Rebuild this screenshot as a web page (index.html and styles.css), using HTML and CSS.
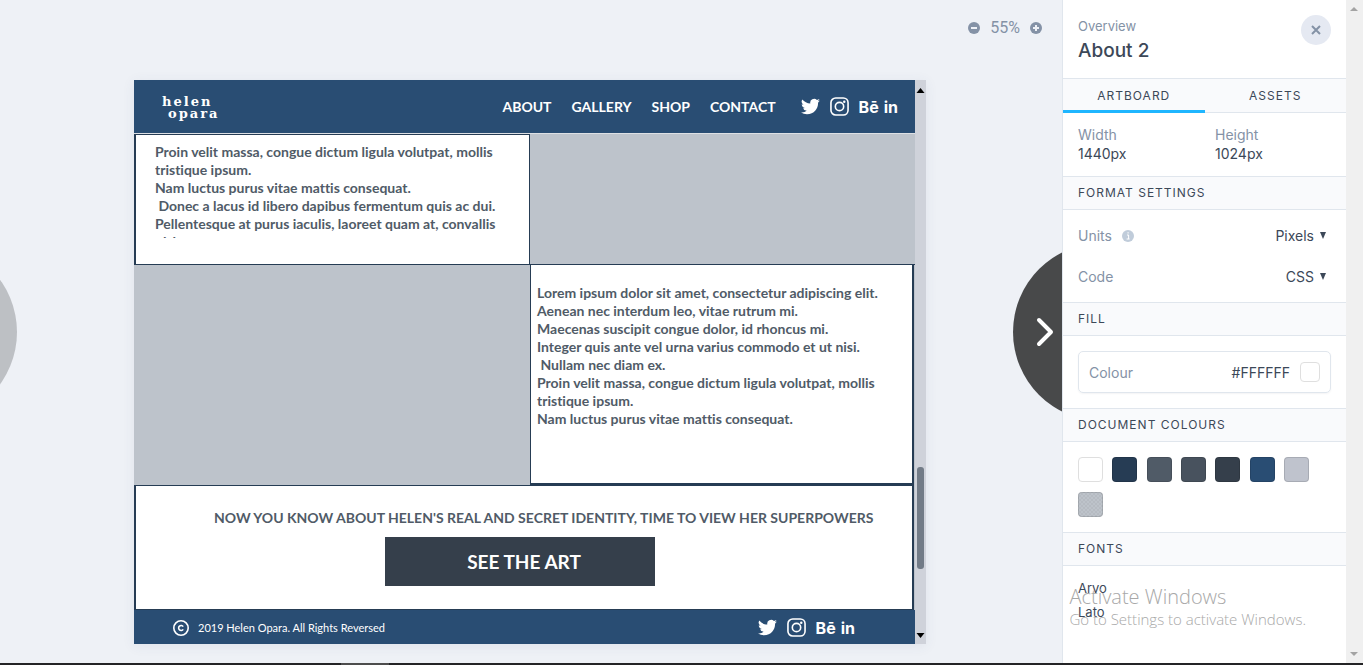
FILE: index.html
```
<!DOCTYPE html>
<html lang="en">
<head>
<meta charset="utf-8">
<title>About 2</title>
<link rel="stylesheet" href="styles.css">
</head>
<body>
<svg class="defs" width="0" height="0" aria-hidden="true">
  <symbol id="twitter" viewBox="0 0 24 24"><path fill="currentColor" d="M23.95 4.57a10 10 0 0 1-2.82.77 4.96 4.96 0 0 0 2.16-2.72c-.95.55-2 .96-3.13 1.18a4.92 4.92 0 0 0-8.38 4.48C7.69 8.1 4.07 6.13 1.64 3.16a4.9 4.9 0 0 0 1.52 6.57 4.9 4.9 0 0 1-2.23-.61v.06c0 2.39 1.69 4.38 3.95 4.83a5 5 0 0 1-2.21.08 4.94 4.94 0 0 0 4.6 3.42A9.87 9.87 0 0 1 0 19.54a13.99 13.99 0 0 0 7.55 2.21c9.05 0 14-7.5 14-13.98 0-.21 0-.42-.02-.63a9.9 9.9 0 0 0 2.42-2.57z"/></symbol>
  <symbol id="instagram" viewBox="0 0 20 20"><g fill="none" stroke="currentColor" stroke-width="1.7"><rect x="1" y="1" width="18" height="18" rx="5"/><circle cx="10" cy="10" r="4.4"/></g><circle cx="15" cy="5" r="1.3" fill="currentColor"/></symbol>
</svg>
<div class="app">
  <main class="stage">
    <div class="zoom">
      <button class="zoom-btn" aria-label="Zoom out"><svg viewBox="0 0 12 12"><circle cx="6" cy="6" r="6"/><path d="M3 6h6"/></svg></button>
      <span>55%</span>
      <button class="zoom-btn" aria-label="Zoom in"><svg viewBox="0 0 12 12"><circle cx="6" cy="6" r="6"/><path d="M3 6h6M6 3v6"/></svg></button>
    </div>
    <button class="pager prev" aria-label="Previous artboard"></button>
    <button class="pager next" aria-label="Next artboard"><svg viewBox="0 0 18 30"><path d="M3 3l12 12L3 27"/></svg></button>
    <div class="artboard">
      <div class="page">
        <header class="site-head">
          <div class="logo"><span>helen</span><span class="logo-second">opara</span></div>
          <nav class="menu"><a href="#">ABOUT</a><a href="#">GALLERY</a><a href="#">SHOP</a><a href="#">CONTACT</a></nav>
          <div class="social">
            <a href="#" aria-label="Twitter"><svg><use href="#twitter"/></svg></a>
            <a href="#" aria-label="Instagram"><svg><use href="#instagram"/></svg></a>
            <a href="#" class="mark">Bē</a><a href="#" class="mark">in</a>
          </div>
        </header>
        <section class="row row-first">
          <div class="card card-left"><div class="copy clipped"><p>Proin velit massa, congue dictum ligula volutpat, mollis</p><p>tristique ipsum.</p><p>Nam luctus purus vitae mattis consequat.</p><p> Donec a lacus id libero dapibus fermentum quis ac dui.</p><p>Pellentesque at purus iaculis, laoreet quam at, convallis</p><p>nisi.</p></div></div>
        </section>
        <section class="row row-second">
          <div class="card card-right"><div class="copy"><p>Lorem ipsum dolor sit amet, consectetur adipiscing elit.</p><p>Aenean nec interdum leo, vitae rutrum mi.</p><p>Maecenas suscipit congue dolor, id rhoncus mi.</p><p>Integer quis ante vel urna varius commodo et ut nisi.</p><p> Nullam nec diam ex.</p><p>Proin velit massa, congue dictum ligula volutpat, mollis</p><p>tristique ipsum.</p><p>Nam luctus purus vitae mattis consequat.</p></div></div>
        </section>
        <section class="cta">
          <h2>NOW YOU KNOW ABOUT HELEN'S REAL AND SECRET IDENTITY, TIME TO VIEW HER SUPERPOWERS</h2>
          <button class="cta-btn">SEE THE ART</button>
        </section>
        <footer class="site-foot">
          <svg class="copyright" viewBox="0 0 16 16"><circle cx="8" cy="8" r="7.2"/><path d="M10.2 6.6A2.5 2.5 0 1 0 10.2 9.4"/></svg>
          <small>2019 Helen Opara. All Rights Reversed</small>
          <div class="social">
            <a href="#" aria-label="Twitter"><svg><use href="#twitter"/></svg></a>
            <a href="#" aria-label="Instagram"><svg><use href="#instagram"/></svg></a>
            <a href="#" class="mark">Bē</a><a href="#" class="mark">in</a>
          </div>
        </footer>
      </div>
      <div class="page-scroll">
        <svg viewBox="0 0 8 5"><path d="M0 5L4 0l4 5z"/></svg>
        <span class="thumb"></span>
        <svg viewBox="0 0 8 5"><path d="M0 0l4 5 4-5z"/></svg>
      </div>
    </div>
  </main>
  <aside class="panel">
    <header class="panel-head">
      <div><p class="kicker">Overview</p><h1>About 2</h1></div>
      <button class="close" aria-label="Close"><svg viewBox="0 0 10 10"><path d="M1 1l8 8M9 1L1 9"/></svg></button>
    </header>
    <div class="tabs" role="tablist">
      <button role="tab" class="tab active" aria-selected="true">ARTBOARD</button>
      <button role="tab" class="tab" aria-selected="false">ASSETS</button>
    </div>
    <dl class="size">
      <div><dt>Width</dt><dd>1440px</dd></div>
      <div><dt>Height</dt><dd>1024px</dd></div>
    </dl>
    <h2 class="section">FORMAT SETTINGS</h2>
    <div class="settings">
      <div class="field">
        <label for="units">Units</label>
        <svg class="info" viewBox="0 0 12 12"><circle cx="6" cy="6" r="6"/><path d="M5 5h1.6v4M4.6 9h3M5.4 2.9h1.4"/></svg>
        <select id="units"><option>Pixels</option></select>
        <svg class="caret" viewBox="0 0 6 7"><path d="M0 0h6L3 7z"/></svg>
      </div>
      <div class="field">
        <label for="code">Code</label>
        <select id="code"><option>CSS</option></select>
        <svg class="caret" viewBox="0 0 6 7"><path d="M0 0h6L3 7z"/></svg>
      </div>
    </div>
    <h2 class="section">FILL</h2>
    <div class="fill"><div class="fill-box"><span class="fill-name">Colour</span><span>#FFFFFF</span><i class="chip white"></i></div></div>
    <h2 class="section">DOCUMENT COLOURS</h2>
    <div class="swatches">
      <button class="swatch white" aria-label="White"></button>
      <button class="swatch navy" aria-label="Navy"></button>
      <button class="swatch slate" aria-label="Slate"></button>
      <button class="swatch steel" aria-label="Steel"></button>
      <button class="swatch coal" aria-label="Coal"></button>
      <button class="swatch blue" aria-label="Blue"></button>
      <button class="swatch mist" aria-label="Mist"></button>
      <button class="swatch haze" aria-label="Haze"></button>
    </div>
    <h2 class="section">FONTS</h2>
    <ul class="fonts"><li>Arvo</li><li>Lato</li></ul>
  </aside>
  <div class="window-scroll">
    <svg viewBox="0 0 8 4"><path d="M0 4L4 0l4 4z"/></svg>
    <svg viewBox="0 0 8 4"><path d="M0 0l4 4 4-4z"/></svg>
  </div>
  <div class="watermark"><p class="wm-title">Activate Windows</p><p>Go to Settings to activate Windows.</p></div>
</div>
<div class="taskbar"><span></span></div>
</body>
</html>
```
FILE: styles.css
```
* { box-sizing: border-box; }
body, p, h1, h2, dl, dd, ul { margin: 0; padding: 0; }
body {
  height: 100vh;
  display: flex;
  flex-direction: column;
  overflow: hidden;
  font-family: Inter, "Liberation Sans", sans-serif;
  color: #3c4858;
}
button, select { font: inherit; color: inherit; border: 0; padding: 0; background: none; }
a { color: inherit; text-decoration: none; }
svg { display: block; }
.defs { position: absolute; }
.app { position: relative; flex: 1; min-height: 0; display: flex; }

.stage { position: relative; flex: 1; min-width: 0; overflow: hidden; background: #eef1f6; }
.zoom {
  height: 80px;
  padding: 0 20px 24px;
  display: flex;
  align-items: center;
  justify-content: flex-end;
  gap: 10px;
  color: #8492a6;
  font: 16px/20px Roboto, sans-serif;
}
.zoom-btn svg { width: 12px; height: 12px; fill: #8492a6; stroke: #eef1f6; stroke-width: 2; }
.zoom-btn circle { stroke: none; }
.pager { position: absolute; top: 243px; width: 178px; height: 178px; border-radius: 50%; }
.prev { left: -161px; background: #bdc0c4; }
.next { right: -129px; background: #48494a; }
.next svg { width: 18px; height: 30px; margin-left: 23px; fill: none; stroke: #fff; stroke-width: 4; stroke-linecap: round; stroke-linejoin: round; }

.artboard {
  margin: 0 136px 0 134px;
  display: flex;
  font-family: Lato, sans-serif;
  font-variant-ligatures: none;
  box-shadow: 0 2px 12px rgba(60, 72, 110, .08);
}
.page { flex: 1; min-width: 0; background: #bdc3cb; }
.site-head, .site-foot { display: flex; align-items: center; background: #294d73; color: #fff; }
.site-head { height: 54px; padding: 0 17px 0 28px; border-bottom: 1px solid #dde0e4; }
.logo { flex: 1; padding-top: 2px; font: bold 13px/12px "DejaVu Serif", serif; letter-spacing: 2px; }
.logo span { display: block; }
.logo .logo-second { margin-left: 6px; }
.menu { display: flex; gap: 20px; margin-right: 25px; font-size: 14px; font-weight: 700; }
.social { display: flex; align-items: center; gap: 10px; }
.social svg { width: 19px; height: 19px; }
.mark { font: bold 16px/20px Inter, sans-serif; }
.mark + .mark { margin-left: -5px; }

.row { display: grid; grid-template-columns: 396fr 385fr; }
.row-first { height: 130px; }
.row-second { height: 221px; border-top: 1px solid #263c54; }
.card { background: #fff; border: 1px solid #263c54; }
.card-left { padding: 8px 0 0 19px; border-left-width: 2px; border-bottom: 0; }
.card-right { grid-column: 2; margin-right: 1px; padding: 19px 0 0 6px; border-top: 0; border-right-width: 2px; border-bottom-width: 2px; }
.copy { font-size: 14px; line-height: 18px; font-weight: 700; color: #505b67; white-space: pre; }
.clipped { height: 95px; overflow: hidden; }
.cta { height: 125px; margin-right: 1px; padding: 22px 0 0; border: 2px solid #263c54; border-top-width: 1px; border-bottom-width: 1px; background: #fff; }
.cta h2 { padding-left: 78px; font-size: 14px; line-height: 20px; font-weight: 700; color: #505b67; white-space: nowrap; }
.cta-btn { display: block; width: 270px; height: 49px; margin: 9px 0 0 249px; padding-left: 8px; background: #353f4b; color: #fff; font-size: 19px; font-weight: 700; }
.site-foot { height: 34px; padding: 1px 60px 0 39px; gap: 9px; }
.site-foot small { flex: 1; font-size: 11px; }
.copyright { width: 16px; height: 16px; fill: none; stroke: #fff; stroke-width: 1.6; }
.page-scroll { width: 11px; padding: 8px 0 6px; display: flex; flex-direction: column; align-items: center; background: #cfd2da; }
.page-scroll svg { width: 9px; height: 5px; }
.thumb { width: 7px; height: 102px; margin: auto 0 64px; border-radius: 3px; background: #727b87; }

.panel { width: 284px; background: #fff; border-left: 1px solid #e0e6ed; font-size: 14px; line-height: 19px; overflow: hidden; }
.panel-head { height: 78px; padding: 15px; display: flex; justify-content: space-between; align-items: flex-start; }
.kicker { padding-top: 2px; color: #8492a6; font-size: 13px; }
.panel-head h1 { font-size: 19px; line-height: 30px; font-weight: 500; }
.close { width: 30px; height: 30px; display: grid; place-items: center; border-radius: 50%; background: #e5e9f2; }
.close svg { width: 10px; height: 10px; stroke: #8492a6; stroke-width: 2; }
.tabs { height: 35px; display: flex; border: solid #e0e6ed; border-width: 1px 0; background: #f9fafc; }
.tab { flex: 1; margin-bottom: -1px; padding-top: 2px; border-bottom: 3px solid transparent; font-size: 12px; letter-spacing: 1px; }
.tab.active { border-color: #1fb6ff; }
.size { height: 63px; padding: 12px 15px; display: grid; grid-template-columns: 137fr 116fr; }
.size dt, .field label, .fill-name { color: #8492a6; }
.section { height: 34px; padding: 0 15px; border: solid #e0e6ed; border-width: 1px 0; background: #f9fafc; font-size: 12px; line-height: 32px; font-weight: 400; letter-spacing: 1px; }
.settings { padding: 5px 20px 5px 15px; }
.field { height: 41px; display: flex; align-items: center; gap: 6px; }
.field select { margin-left: auto; appearance: none; text-align-last: right; }
.info { width: 12px; height: 12px; margin-left: 4px; fill: #c0ccda; stroke: #fff; }
.info circle { stroke: none; }
.caret { width: 6px; height: 7px; fill: #3c4858; }
.fill { padding: 15px; }
.fill-box { height: 42px; padding: 0 10px; display: flex; align-items: center; gap: 10px; border: 1px solid #e0e6ed; border-radius: 5px; box-shadow: 0 1px 2px rgba(60, 72, 88, .06); }
.fill-name { flex: 1; }
.chip { width: 20px; height: 20px; border-radius: 4px; }
.swatches { padding: 15px 37px 15px 15px; display: grid; grid-template-columns: repeat(7, 25px); justify-content: space-between; row-gap: 10px; }
.swatch { height: 25px; border-radius: 4px; border: 1px solid rgba(0, 0, 0, .12); }
.white { background: #fff; border: 1px solid #dfdfdf; }
.navy { background: #263c54; }
.slate { background: #505b67; }
.steel { background: #48525e; }
.coal { background: #353f4b; }
.blue { background: #294d73; }
.mist { background: #bfc3cd; }
.haze { background: repeating-conic-gradient(#b6bbc2 0 25%, #bdc3ca 0 50%) 0 0 / 4px 4px; }
.fonts { padding: 10px 15px; list-style: none; font-size: 13px; line-height: 24px; }
.window-scroll { width: 17px; padding: 7px 4px; display: flex; flex-direction: column; justify-content: space-between; background: #f0f0f0; }
.window-scroll svg { width: 8px; height: 4px; fill: #a3a3a3; }
.watermark { position: absolute; right: 57px; bottom: 34px; color: #a8a8a8; font: 300 15px/20px "Open Sans", sans-serif; }
.wm-title { font-size: 20px; line-height: 24px; }
.taskbar { height: 2px; padding-left: 341px; background: #242426; }
.taskbar span { display: block; width: 48px; height: 2px; background: #4d4d4d; }
```
